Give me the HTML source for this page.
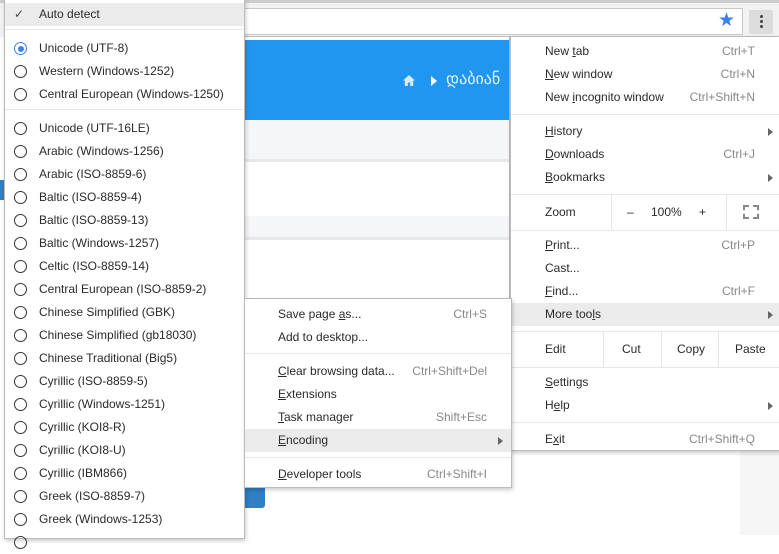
<!DOCTYPE html><html><head><style>
*{margin:0;padding:0;box-sizing:border-box}
body{width:779px;height:535px;overflow:hidden;position:relative;background:#fff;font-family:"Liberation Sans",sans-serif;font-size:12px;color:#2a2a2a}
.a{position:absolute}
.menu{position:absolute;background:#fff;border:1px solid #bbb;box-shadow:1px 2px 4px rgba(0,0,0,.2)}
.it{position:absolute;left:0;right:0;height:23px;line-height:23px}
.it .t{position:absolute}
.it .k{position:absolute;color:#888}
.sep{position:absolute;left:0;right:0;height:1px;background:#e6e6e6}
.hl{background:#ebebeb}
.r{position:absolute;left:9px;top:5px;width:13px;height:13px;border:1.5px solid #333;border-radius:50%}
.arr{position:absolute;width:0;height:0;border-left:5px solid #666;border-top:4px solid transparent;border-bottom:4px solid transparent}
</style></head><body>
<div class="a" style="left:0;top:0;width:779px;height:37px;background:#f2f2f2;border-top:3px solid #ccc"></div>
<div class="a" style="left:200px;top:8px;width:543px;height:27px;background:#fff;border:1px solid #c8c8c8"></div>
<div class="a" style="left:718px;top:9px;color:#3b82e6;font-size:19px">★</div>
<div class="a" style="left:749px;top:10px;width:24px;height:24px;background:#dcdcdc;border-radius:2px"></div>
<div class="a" style="left:760px;top:15px;width:3px;height:3px;background:#444;border-radius:50%;box-shadow:0 5px 0 #444,0 10px 0 #444"></div>
<div class="a" style="left:244px;top:36px;width:266px;height:264px;border:1px solid #bbb;border-left:none;background:#fff"></div>
<div class="a" style="left:245px;top:40px;width:264px;height:80px;background:#2196f0"></div>
<svg class="a" style="left:403px;top:75px" width="12" height="11" viewBox="0 0 12 11"><path d="M6 0L0 5.5H1.8V11H4.8V7.5H7.2V11H10.2V5.5H12Z" fill="#d6ebfc"/></svg>
<div class="a" style="left:431px;top:76px;width:0;height:0;border-left:6px solid #fff;border-top:5px solid transparent;border-bottom:5px solid transparent"></div>
<div class="a" style="left:446px;top:69px;color:#e8f3fd;font-size:16px;white-space:nowrap;width:63px;overflow:hidden">დაბიან</div>
<div class="a" style="left:245px;top:120px;width:264px;height:42px;background:#f5f6f7;border-bottom:3px solid #e8e8e8"></div>
<div class="a" style="left:245px;top:216px;width:264px;height:24px;background:#f5f6f7;border-bottom:3px solid #e8e8e8"></div>
<div class="a" style="left:245px;top:487px;width:20px;height:21px;background:#2f7fc4;border-radius:0 0 3px 0"></div>
<div class="a" style="left:740px;top:450px;width:39px;height:85px;background:#f5f5f5"></div>
<div class="a" style="left:0;top:180px;width:5px;height:20px;background:#2f7fc4"></div>
<div class="menu" style="left:4px;top:-1px;width:241px;height:540px">
<div class="it hl" style="top:3px"><span class="t" style="left:9px;color:#444">✓</span><span class="t" style="left:34px">Auto detect</span></div>
<div class="sep" style="top:29px"></div>
<div class="it" style="top:37px"><span class="r" style="border-color:#3b82e6"></span><span class="a" style="left:13px;top:9px;width:6px;height:6px;background:#3b82e6;border-radius:50%"></span><span class="t" style="left:34px">Unicode (UTF-8)</span></div>
<div class="it" style="top:60px"><span class="r"></span><span class="t" style="left:34px">Western (Windows-1252)</span></div>
<div class="it" style="top:83px"><span class="r"></span><span class="t" style="left:34px">Central European (Windows-1250)</span></div>
<div class="sep" style="top:109px"></div>
<div class="it" style="top:117px"><span class="r"></span><span class="t" style="left:34px">Unicode (UTF-16LE)</span></div>
<div class="it" style="top:140px"><span class="r"></span><span class="t" style="left:34px">Arabic (Windows-1256)</span></div>
<div class="it" style="top:163px"><span class="r"></span><span class="t" style="left:34px">Arabic (ISO-8859-6)</span></div>
<div class="it" style="top:186px"><span class="r"></span><span class="t" style="left:34px">Baltic (ISO-8859-4)</span></div>
<div class="it" style="top:209px"><span class="r"></span><span class="t" style="left:34px">Baltic (ISO-8859-13)</span></div>
<div class="it" style="top:232px"><span class="r"></span><span class="t" style="left:34px">Baltic (Windows-1257)</span></div>
<div class="it" style="top:255px"><span class="r"></span><span class="t" style="left:34px">Celtic (ISO-8859-14)</span></div>
<div class="it" style="top:278px"><span class="r"></span><span class="t" style="left:34px">Central European (ISO-8859-2)</span></div>
<div class="it" style="top:301px"><span class="r"></span><span class="t" style="left:34px">Chinese Simplified (GBK)</span></div>
<div class="it" style="top:324px"><span class="r"></span><span class="t" style="left:34px">Chinese Simplified (gb18030)</span></div>
<div class="it" style="top:347px"><span class="r"></span><span class="t" style="left:34px">Chinese Traditional (Big5)</span></div>
<div class="it" style="top:370px"><span class="r"></span><span class="t" style="left:34px">Cyrillic (ISO-8859-5)</span></div>
<div class="it" style="top:393px"><span class="r"></span><span class="t" style="left:34px">Cyrillic (Windows-1251)</span></div>
<div class="it" style="top:416px"><span class="r"></span><span class="t" style="left:34px">Cyrillic (KOI8-R)</span></div>
<div class="it" style="top:439px"><span class="r"></span><span class="t" style="left:34px">Cyrillic (KOI8-U)</span></div>
<div class="it" style="top:462px"><span class="r"></span><span class="t" style="left:34px">Cyrillic (IBM866)</span></div>
<div class="it" style="top:485px"><span class="r"></span><span class="t" style="left:34px">Greek (ISO-8859-7)</span></div>
<div class="it" style="top:508px"><span class="r"></span><span class="t" style="left:34px">Greek (Windows-1253)</span></div>
<div class="it" style="top:531px"><span class="r"></span></div>
</div>
<div class="menu" style="left:510px;top:36px;width:270px;height:415px">
<div class="it" style="top:3px"><span class="t" style="left:34px">New <u>t</u>ab</span><span class="k" style="right:24px">Ctrl+T</span></div>
<div class="it" style="top:26px"><span class="t" style="left:34px"><u>N</u>ew window</span><span class="k" style="right:24px">Ctrl+N</span></div>
<div class="it" style="top:49px"><span class="t" style="left:34px">New <u>i</u>ncognito window</span><span class="k" style="right:24px">Ctrl+Shift+N</span></div>
<div class="sep" style="top:77px"></div>
<div class="it" style="top:83px"><span class="t" style="left:34px"><u>H</u>istory</span><span class="arr" style="right:6px;top:8px"></span></div>
<div class="it" style="top:106px"><span class="t" style="left:34px"><u>D</u>ownloads</span><span class="k" style="right:24px">Ctrl+J</span></div>
<div class="it" style="top:129px"><span class="t" style="left:34px"><u>B</u>ookmarks</span><span class="arr" style="right:6px;top:8px"></span></div>
<div class="sep" style="top:157px"></div>
<div class="it" style="top:164px"><span class="t" style="left:34px">Zoom</span><span class="t" style="left:116px">–</span><span class="t" style="left:140px">100%</span><span class="t" style="left:188px">+</span></div>
<div class="a" style="left:100px;top:158px;width:1px;height:35px;background:#e6e6e6"></div>
<div class="a" style="left:215px;top:158px;width:1px;height:35px;background:#e6e6e6"></div>
<div class="a" style="left:232px;top:168px;width:16px;height:14px;border:2px dashed #888"></div>
<div class="sep" style="top:193px"></div>
<div class="it" style="top:197px"><span class="t" style="left:34px"><u>P</u>rint...</span><span class="k" style="right:24px">Ctrl+P</span></div>
<div class="it" style="top:220px"><span class="t" style="left:34px">Cast...</span></div>
<div class="it" style="top:243px"><span class="t" style="left:34px"><u>F</u>ind...</span><span class="k" style="right:24px">Ctrl+F</span></div>
<div class="it hl" style="top:266px"><span class="t" style="left:34px">More too<u>l</u>s</span><span class="arr" style="right:6px;top:8px"></span></div>
<div class="sep" style="top:294px"></div>
<div class="it" style="top:301px"><span class="t" style="left:34px">Edit</span><span class="t" style="left:111px">Cut</span><span class="t" style="left:166px">Copy</span><span class="t" style="left:224px">Paste</span></div>
<div class="a" style="left:92px;top:295px;width:1px;height:35px;background:#e6e6e6"></div>
<div class="a" style="left:150px;top:295px;width:1px;height:35px;background:#e6e6e6"></div>
<div class="a" style="left:207px;top:295px;width:1px;height:35px;background:#e6e6e6"></div>
<div class="sep" style="top:330px"></div>
<div class="it" style="top:334px"><span class="t" style="left:34px"><u>S</u>ettings</span></div>
<div class="it" style="top:357px"><span class="t" style="left:34px">H<u>e</u>lp</span><span class="arr" style="right:6px;top:8px"></span></div>
<div class="sep" style="top:385px"></div>
<div class="it" style="top:391px"><span class="t" style="left:34px">E<u>x</u>it</span><span class="k" style="right:24px">Ctrl+Shift+Q</span></div>
</div>
<div class="menu" style="left:244px;top:298px;width:268px;height:190px">
<div class="it" style="top:4px"><span class="t" style="left:33px">Save page <u>a</u>s...</span><span class="k" style="right:24px">Ctrl+S</span></div>
<div class="it" style="top:27px"><span class="t" style="left:33px">Add to desktop...</span></div>
<div class="sep" style="top:54px"></div>
<div class="it" style="top:61px"><span class="t" style="left:33px"><u>C</u>lear browsing data...</span><span class="k" style="right:24px">Ctrl+Shift+Del</span></div>
<div class="it" style="top:84px"><span class="t" style="left:33px"><u>E</u>xtensions</span></div>
<div class="it" style="top:107px"><span class="t" style="left:33px"><u>T</u>ask manager</span><span class="k" style="right:24px">Shift+Esc</span></div>
<div class="it hl" style="top:130px"><span class="t" style="left:33px"><u>E</u>ncoding</span><span class="arr" style="right:8px;top:8px"></span></div>
<div class="sep" style="top:158px"></div>
<div class="it" style="top:164px"><span class="t" style="left:33px"><u>D</u>eveloper tools</span><span class="k" style="right:24px">Ctrl+Shift+I</span></div>
</div>
</body></html>
